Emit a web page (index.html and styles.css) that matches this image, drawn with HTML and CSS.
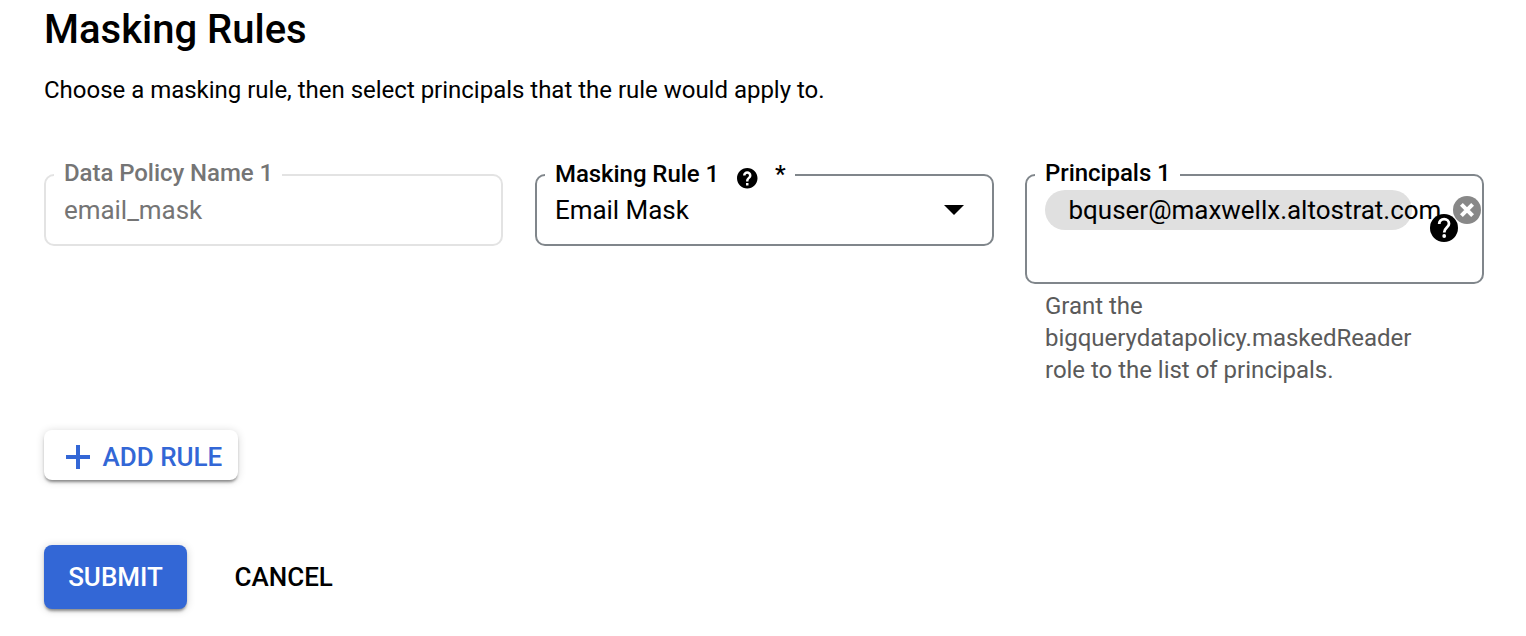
FILE: index.html
```html
<!DOCTYPE html>
<html lang="en">
<head>
<meta charset="utf-8">
<title>Masking Rules</title>
<link rel="stylesheet" href="styles.css">
</head>
<body>
<main class="page">
  <h1 class="title">Masking Rules</h1>
  <p class="intro">Choose a masking rule, then select principals that the rule would apply to.</p>
  <section class="fields">
    <div class="field disabled">
      <div class="label"><span class="label-text">Data Policy Name 1</span></div>
      <div class="value">email_mask</div>
    </div>
    <div class="field select">
      <div class="label label-help"><span class="label-text">Masking Rule 1</span>
        <svg class="help-small" viewBox="2 2 20 20"><path fill="#fff" d="M6 4h12v16H6z"/><path d="M12 2C6.48 2 2 6.48 2 12s4.480 10 10 10 10-4.480 10-10S17.520 2 12 2zm1.200 17h-2.400v-2.400h2.400V19zm1.900-7.300l-.8.850c-.75.75-1.100 1.350-1.100 2.650h-2.400v-.6c0-1.100.45-2.100 1.150-2.850l1.200-1.200c.35-.35.55-.8.55-1.350a1.700 1.700 0 0 0-3.400 0H7.900a4.100 4.100 0 0 1 8.200 0c0 1-.4 1.850-1 2.500z"/></svg>
        <span class="star">*</span></div>
      <div class="value">Email Mask</div>
      <svg class="caret" viewBox="0 0 20 10"><path d="M0 0h20L10 10z"/></svg>
    </div>
    <div class="column">
      <div class="field principals">
        <div class="label"><span class="label-text">Principals 1</span></div>
        <div class="chip"><span class="chip-text">bquser@maxwellx.altostrat.com</span></div>
        <svg class="remove" viewBox="0 0 28 28"><circle cx="14" cy="14" r="14" fill="#888"/><path d="M8.400 8.400l11.200 11.200M19.600 8.400l-11.200 11.200" stroke="#fff" stroke-width="4"/></svg>
        <svg class="help" viewBox="0 0 28 28"><circle cx="14" cy="14" r="14"/><path d="M9.200 10C9.200 6.900 11.200 5.200 14.100 5.200S19 7 19 9.700C19 13.500 14.200 13.700 14.200 18.400" fill="none" stroke="#fff" stroke-width="2.800"/><circle cx="14.200" cy="22" r="1.900" fill="#fff"/></svg>
      </div>
      <p class="hint">Grant the<br>bigquerydatapolicy.maskedReader<br>role to the list of principals.</p>
    </div>
  </section>
  <button class="add"><svg class="plus" viewBox="0 0 24 24"><path d="M12 0v24M0 12h24" stroke="#3367d6" stroke-width="4"/></svg><span>ADD RULE</span></button>
  <div class="actions">
    <button class="submit">SUBMIT</button>
    <button class="cancel">CANCEL</button>
  </div>
</main>
</body>
</html>
```
FILE: styles.css
```css
* { box-sizing: border-box; }
body { margin: 0; background: #fff; color: #000; font-family: Roboto, sans-serif; }
.page { height: 636px; padding: 6px 42px 0 44px; overflow: hidden; }
.title { margin: 0; font-size: 40px; line-height: 48px; font-weight: 500; }
.intro { margin: 20px 0 0; font-size: 24px; line-height: 32px; letter-spacing: -.013px; }
.fields { display: grid; grid-template-columns: 491px 490px 459px; margin-top: 68px; height: 256px; align-items: start; }
.field { position: relative; width: 459px; height: 72px; border: 2px solid #80868b; border-radius: 10px; padding: 18px 18px 0; }
.disabled { border-color: #e3e3e3; color: #757575; }
.label { position: absolute; left: 8px; top: -17px; height: 28px; padding: 0 9px 0 10px; display: flex; background: #fff; font-size: 24px; line-height: 28px; font-weight: 500; letter-spacing: -.06px; white-space: nowrap; }
.label-help { top: -16px; }
.value { font-size: 26px; line-height: 32px; letter-spacing: -.05px; }
.help-small { width: 20.5px; height: 20.5px; margin: 8px 0 0 18px; }
.star { margin-left: 17.5px; }
.caret { position: absolute; left: 407px; top: 29px; width: 20px; height: 10px; }
.principals { height: 110px; padding-top: 14px; }
.chip { width: 367px; height: 40px; border-radius: 20px; background: #e0e0e0; padding-left: 23.5px; font-size: 26px; line-height: 40px; letter-spacing: -.01px; white-space: nowrap; }
.remove { position: absolute; left: 426px; top: 20px; width: 28px; height: 28px; }
.help { position: absolute; left: 403px; top: 38px; width: 28px; height: 28px; }
.hint { margin: 6px 0 0 20px; font-size: 24px; line-height: 32px; letter-spacing: -.02px; color: #5a5a5a; }
button { font-family: inherit; border: 0; font-size: 26px; font-weight: 500; white-space: nowrap; }
.add { display: flex; align-items: center; width: 194px; height: 50px; padding: 4px 0 0 22px; gap: 12.5px; border-radius: 8px; background: #fff; color: #3367d6; box-shadow: 0 3px 3px -1px rgba(0,0,0,.42), 0 1px 8px rgba(0,0,0,.16); }
.plus { width: 24px; height: 24px; }
.actions { display: flex; margin-top: 65px; height: 64px; }
.submit { width: 143px; height: 64px; padding: 0; border-radius: 8px; background: #3367d6; color: #fff; box-shadow: 0 3px 3px -1px rgba(0,0,0,.4), 0 1px 8px rgba(0,0,0,.18); }
.cancel { margin-left: 47.5px; padding: 0; background: none; color: #000; }
```
